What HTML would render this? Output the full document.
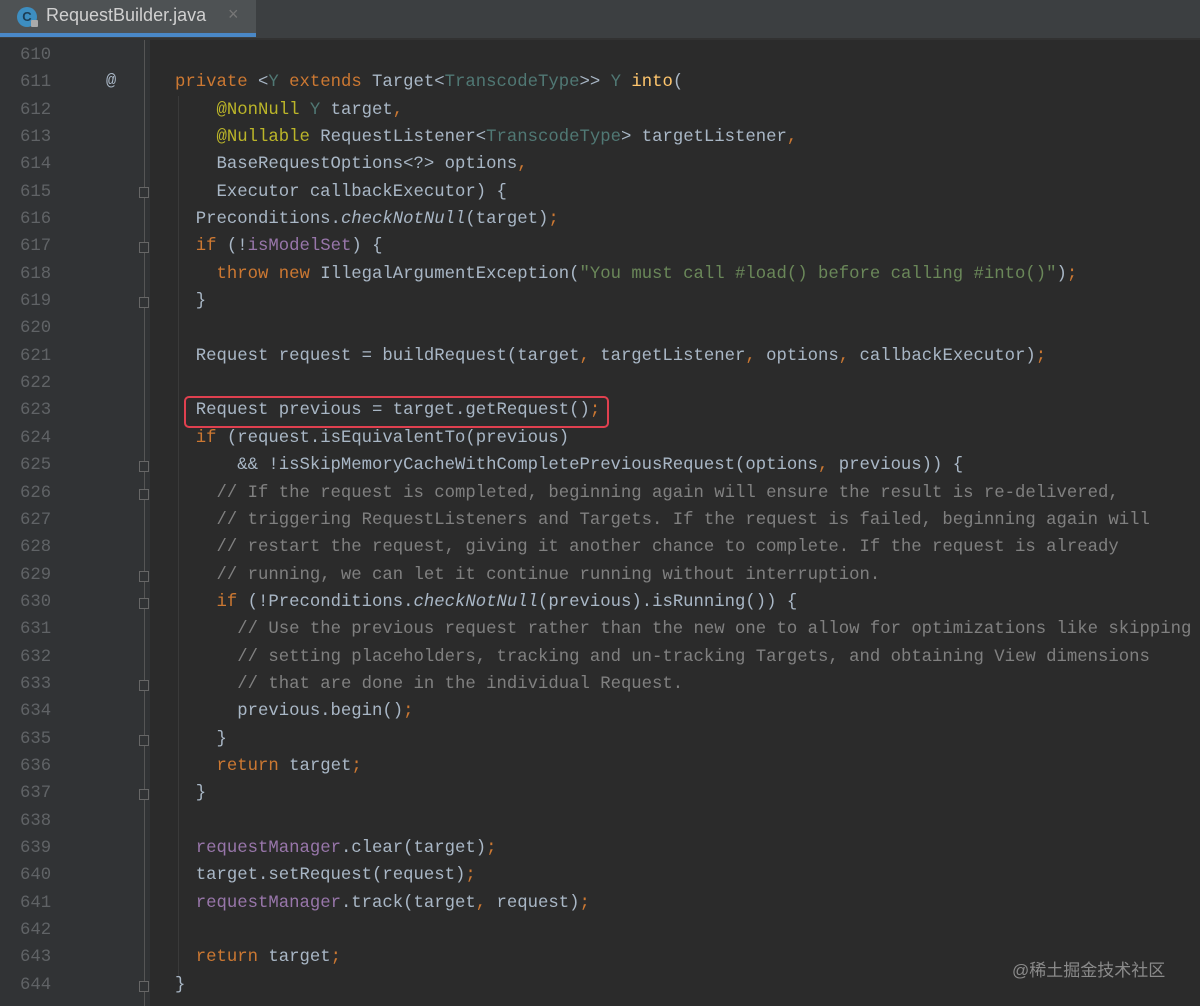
<!DOCTYPE html>
<html><head><meta charset="utf-8"><style>
html,body{margin:0;padding:0;width:1200px;height:1006px;overflow:hidden;background:#2b2b2b;}
.tabbar{position:absolute;left:0;top:0;width:1200px;height:38px;background:#3c3f41;}
.tab{position:absolute;left:0;top:0;width:256px;height:34px;background:#4e5254;}
.tabline{position:absolute;left:0;top:33px;width:256px;height:4px;background:#4a88c7;}
.tabsep{position:absolute;left:0;top:38px;width:1200px;height:2px;background:#323232;}
.tabtxt{position:absolute;left:46px;top:5px;font:18px "Liberation Sans",sans-serif;color:#d0d0d0;}
.tabx{position:absolute;left:228px;top:4px;font:18px "Liberation Sans",sans-serif;color:#777;}
.ico{position:absolute;left:17px;top:7px;width:20px;height:20px;border-radius:50%;background:#3d8ec1;color:#1c3d55;font:bold 13px "Liberation Sans",sans-serif;text-align:center;line-height:20px;}
.lock{position:absolute;left:31px;top:20px;width:7px;height:7px;background:#aaa;border-radius:1px;}
.gutter{position:absolute;left:0;top:40px;width:150px;height:966px;background:#313335;}
.foldline{position:absolute;left:144px;top:40px;width:1px;height:966px;background:#555;}
pre{margin:0;position:absolute;font-family:"Liberation Mono",monospace;font-size:17.3px;line-height:27.35px;}
.nums{left:20px;top:42px;color:#606366;}
.code{left:175px;top:42px;color:#a9b7c6;}
.k{color:#cc7832}.a{color:#bbb529}.t{color:#507874}.m{color:#ffc66d}.s{color:#6a8759}.c{color:#808080}.f{color:#9876aa}.i{font-style:italic}
.box{position:absolute;left:184px;top:396px;width:421px;height:28px;border:2px solid #e0404f;border-radius:5px;}
.at{position:absolute;left:106px;top:72px;color:#a9b7c6;font:17px "Liberation Mono",monospace;}
.fm{position:absolute;left:139px;width:10px;height:11px;border:1px solid #666;background:#313335;box-sizing:border-box;}
.wm{position:absolute;left:1012px;top:956px;font:17px "Liberation Sans","Noto Sans CJK SC",sans-serif;color:#8a8a8a;}
.guide{position:absolute;width:1px;background:#3a3a3a;}
</style></head><body>
<div class="tabbar"><div class="tab"></div><div class="tabline"></div>
<div class="ico">C</div><div class="lock"></div>
<div class="tabtxt">RequestBuilder.java</div><div class="tabx">×</div></div>
<div class="tabsep"></div>
<div class="gutter"></div>
<div class="foldline"></div>
<div class="fm" style="top:187px"></div>
<div class="fm" style="top:242px"></div>
<div class="fm" style="top:297px"></div>
<div class="fm" style="top:461px"></div>
<div class="fm" style="top:489px"></div>
<div class="fm" style="top:571px"></div>
<div class="fm" style="top:598px"></div>
<div class="fm" style="top:680px"></div>
<div class="fm" style="top:735px"></div>
<div class="fm" style="top:789px"></div>
<div class="fm" style="top:981px"></div>
<div class="guide" style="left:178px;top:96px;height:880px"></div>
<div class="at">@</div>
<pre class="nums">610
611
612
613
614
615
616
617
618
619
620
621
622
623
624
625
626
627
628
629
630
631
632
633
634
635
636
637
638
639
640
641
642
643
644</pre>
<pre class="code">

<span class="k">private</span> &lt;<span class="t">Y</span> <span class="k">extends</span> Target&lt;<span class="t">TranscodeType</span>&gt;&gt; <span class="t">Y</span> <span class="m">into</span>(
    <span class="a">@NonNull</span> <span class="t">Y</span> target<span class="k">,</span>
    <span class="a">@Nullable</span> RequestListener&lt;<span class="t">TranscodeType</span>&gt; targetListener<span class="k">,</span>
    BaseRequestOptions&lt;?&gt; options<span class="k">,</span>
    Executor callbackExecutor) {
  Preconditions.<span class="i">checkNotNull</span>(target)<span class="k">;</span>
  <span class="k">if</span> (!<span class="f">isModelSet</span>) {
    <span class="k">throw new</span> IllegalArgumentException(<span class="s">"You must call #load() before calling #into()"</span>)<span class="k">;</span>
  }

  Request request = buildRequest(target<span class="k">,</span> targetListener<span class="k">,</span> options<span class="k">,</span> callbackExecutor)<span class="k">;</span>

  Request previous = target.getRequest()<span class="k">;</span>
  <span class="k">if</span> (request.isEquivalentTo(previous)
      &amp;&amp; !isSkipMemoryCacheWithCompletePreviousRequest(options<span class="k">,</span> previous)) {
    <span class="c">// If the request is completed, beginning again will ensure the result is re-delivered,</span>
    <span class="c">// triggering RequestListeners and Targets. If the request is failed, beginning again will</span>
    <span class="c">// restart the request, giving it another chance to complete. If the request is already</span>
    <span class="c">// running, we can let it continue running without interruption.</span>
    <span class="k">if</span> (!Preconditions.<span class="i">checkNotNull</span>(previous).isRunning()) {
      <span class="c">// Use the previous request rather than the new one to allow for optimizations like skipping</span>
      <span class="c">// setting placeholders, tracking and un-tracking Targets, and obtaining View dimensions</span>
      <span class="c">// that are done in the individual Request.</span>
      previous.begin()<span class="k">;</span>
    }
    <span class="k">return</span> target<span class="k">;</span>
  }

  <span class="f">requestManager</span>.clear(target)<span class="k">;</span>
  target.setRequest(request)<span class="k">;</span>
  <span class="f">requestManager</span>.track(target<span class="k">,</span> request)<span class="k">;</span>

  <span class="k">return</span> target<span class="k">;</span>
}</pre>
<div class="box"></div>
<div class="wm">@稀土掘金技术社区</div>
</body></html>
